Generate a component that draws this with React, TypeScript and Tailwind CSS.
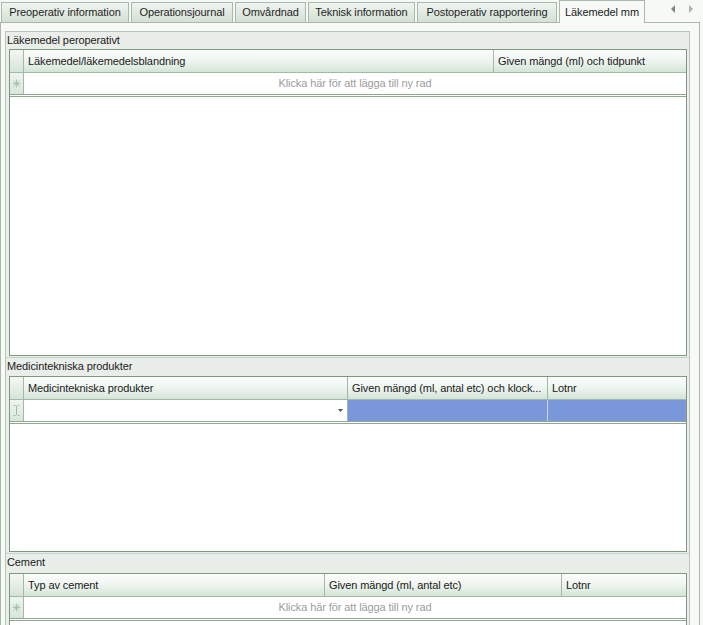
import React from 'react';

const tabs = [
  { label: 'Preoperativ information', w: 128 },
  { label: 'Operationsjournal', w: 102 },
  { label: 'Omvårdnad', w: 71 },
  { label: 'Teknisk information', w: 107 },
  { label: 'Postoperativ rapportering', w: 140 },
];

type Col = { title: string; w?: number };

function NewRowGlyph() {
  return (
    <svg width="9" height="9" viewBox="0 0 9 9" className="text-[#a9c2ab]">
      <g stroke="currentColor" strokeWidth="1">
        <line x1="4.5" y1="0.5" x2="4.5" y2="8.5" />
        <line x1="0.5" y1="4.5" x2="8.5" y2="4.5" />
        <line x1="1.5" y1="1.5" x2="7.5" y2="7.5" />
        <line x1="7.5" y1="1.5" x2="1.5" y2="7.5" />
      </g>
    </svg>
  );
}

function EditGlyph() {
  return (
    <svg width="7" height="11" viewBox="0 0 7 11" className="text-[#a3b5a5]">
      <g stroke="currentColor" strokeWidth="1" fill="none">
        <line x1="0.5" y1="0.5" x2="2.5" y2="0.5" />
        <line x1="4.5" y1="0.5" x2="6.5" y2="0.5" />
        <line x1="3.5" y1="1" x2="3.5" y2="10" />
        <line x1="0.5" y1="10.5" x2="2.5" y2="10.5" />
        <line x1="4.5" y1="10.5" x2="6.5" y2="10.5" />
      </g>
    </svg>
  );
}

function Header({ cols }: { cols: Col[] }) {
  return (
    <div className="flex h-[23px] border-b border-[#a3b9a6] bg-gradient-to-b from-[#fbfdfb] via-[#eef5ef] to-[#d3e5d7]">
      <div className="w-[14px] shrink-0 border-r border-[#a3b9a6] bg-gradient-to-b from-[#f4f8f4] to-[#d6e3d8]" />
      {cols.map((c, i) => (
        <div
          key={i}
          className={`flex items-center px-[4px] truncate ${c.w ? 'shrink-0 border-r border-[#a3b9a6]' : 'flex-1'}`}
          style={c.w ? { width: c.w } : undefined}
        >
          {c.title}
        </div>
      ))}
    </div>
  );
}

function Grid({ cols, height, children }: { cols: Col[]; height: number; children: React.ReactNode }) {
  return (
    <div className="ml-[3px] mr-[2px] border border-[#7f9882] bg-white" style={{ height }}>
      <Header cols={cols} />
      {children}
      <div className="h-[2px] border-b border-[#8fa892]" />
    </div>
  );
}

function NewItemRow() {
  return (
    <div className="flex h-[22px] border-b border-[#8fa892]">
      <div className="w-[14px] shrink-0 border-r border-[#a3b9a6] bg-gradient-to-b from-[#eef4ef] to-[#d9e6db] flex items-center justify-center">
        <NewRowGlyph />
      </div>
      <div className="flex-1 flex items-center justify-center text-[#9c9c9c]">
        Klicka här för att lägga till ny rad
      </div>
    </div>
  );
}

function Section({ title, children }: { title: string; children: React.ReactNode }) {
  return (
    <div>
      <div className="h-[17px] leading-[17px] pl-[1px] text-[#1a1a1a]">{title}</div>
      {children}
    </div>
  );
}

export default function App() {
  return (
    <div className="w-[703px] h-[625px] overflow-hidden bg-[#f6f9f6] text-[11px] tracking-[-0.1px] text-[#1a1a1a] font-['Liberation_Sans',Arial,sans-serif]">
      {/* Tab strip */}
      <div className="relative flex items-end h-[22px] gap-[2px] pl-[1px]">
        {tabs.map((t) => (
          <div
            key={t.label}
            className="h-[20px] shrink-0 flex items-center justify-center border border-b-0 border-[#a8b9aa] bg-gradient-to-b from-[#eff4ef] to-[#d4e0d5] text-[#1f1f1f]"
            style={{ width: t.w }}
          >
            {t.label}
          </div>
        ))}
        <div className="h-[23px] w-[86px] -mb-px shrink-0 flex items-center justify-center border border-b-0 border-[#a8b9aa] bg-[#f7faf7] z-10">
          Läkemedel mm
        </div>
        <div className="absolute right-[10px] top-[5px] flex gap-[12px]">
          <svg width="5" height="8" viewBox="0 0 5 8"><path d="M4 0 L0 4 L4 8 Z" fill="#7c8a7d" /></svg>
          <svg width="5" height="8" viewBox="0 0 5 8"><path d="M1 0 L5 4 L1 8 Z" fill="#aab3aa" /></svg>
        </div>
      </div>

      {/* Tab page */}
      <div className="w-[700px] h-[603px] border-l border-r border-t border-[#a8b9aa] bg-[#f6f9f6] pt-[8px]">
        <div className="ml-[4px] w-[685px] h-[600px] border-l border-t border-r border-[#b7c6b8] bg-[#e9eee9]">
          <Section title="Läkemedel peroperativt">
            <Grid cols={[{ title: 'Läkemedel/läkemedelsblandning', w: 470 }, { title: 'Given mängd (ml) och tidpunkt' }]} height={307}>
              <NewItemRow />
            </Grid>
          </Section>
          <div className="h-[2px] border-b border-[#c7d3c8]" />
          <Section title="Medicintekniska produkter">
            <div className="h-[1px]" />
            <Grid
              cols={[
                { title: 'Medicintekniska produkter', w: 324 },
                { title: 'Given mängd (ml, antal etc) och klock...', w: 200 },
                { title: 'Lotnr' },
              ]}
              height={176}
            >
              <div className="flex h-[22px] border-b border-[#8fa892]">
                <div className="w-[14px] shrink-0 border-r border-[#a3b9a6] bg-gradient-to-b from-[#eef4ef] to-[#d9e6db] flex items-center justify-center">
                  <EditGlyph />
                </div>
                <div className="w-[324px] shrink-0 border-r border-[#a3b9a6] flex items-center justify-end pr-[4px]">
                  <svg width="5" height="3" viewBox="0 0 5 3"><path d="M0 0 H5 L2.5 3 Z" fill="#555" /></svg>
                </div>
                <div className="w-[200px] shrink-0 border-r border-[#c9d4ee] bg-[#7b97dc]" />
                <div className="flex-1 bg-[#7b97dc]" />
              </div>
            </Grid>
          </Section>
          <div className="h-[2px] border-b border-[#c7d3c8]" />
          <Section title="Cement">
            <div className="h-[2px]" />
            <Grid
              cols={[
                { title: 'Typ av cement', w: 301 },
                { title: 'Given mängd (ml, antal etc)', w: 237 },
                { title: 'Lotnr' },
              ]}
              height={80}
            >
              <NewItemRow />
            </Grid>
          </Section>
        </div>
      </div>
    </div>
  );
}
